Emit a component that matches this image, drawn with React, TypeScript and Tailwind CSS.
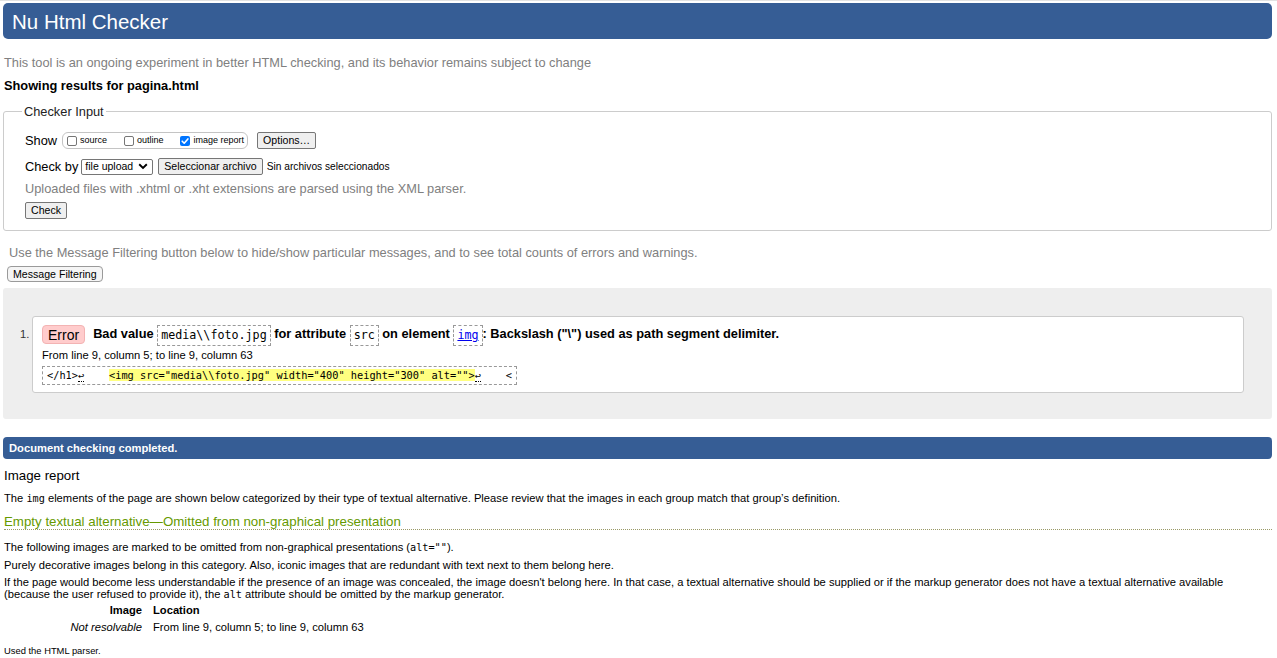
import React from "react";

const Box = ({ checked }: { checked?: boolean }) =>
  checked ? (
    <span className="inline-flex h-[10px] w-[10px] items-center justify-center rounded-[2px] bg-[#0075ff]">
      <svg viewBox="0 0 10 10" className="h-[10px] w-[10px]">
        <path d="M2.2 5.2 L4.2 7.2 L7.9 2.9" stroke="white" strokeWidth="1.6" fill="none" strokeLinecap="round" strokeLinejoin="round" />
      </svg>
    </span>
  ) : (
    <span className="inline-block h-[10px] w-[10px] rounded-[2px] border border-[#767676] bg-white" />
  );

const Btn = ({ children, className = "" }: { children: React.ReactNode; className?: string }) => (
  <span
    className={
      "inline-flex h-[17px] items-center rounded-[2px] border border-[#767676] bg-[#efefef] px-[5px] text-[10.6px] leading-none text-black " +
      className
    }
  >
    {children}
  </span>
);

const Code = ({ children }: { children: React.ReactNode }) => (
  <code className="inline-block h-[21px] border border-dashed border-[#999] px-[3px] align-middle font-['DejaVu_Sans_Mono',monospace] text-[11.7px] font-normal leading-[19px]">
    {children}
  </code>
);

const Ret = () => <span className="border-b border-dotted border-black">↩</span>;

export default function App() {
  return (
    <div className="min-h-[658px] bg-white font-['Liberation_Sans',Arial,Helvetica,sans-serif] text-[12.8px] leading-[15px] text-black">
      <div className="h-px bg-[#e2e2e2]" />
      <h1 className="ml-[3px] mr-[5px] mt-[2px] flex h-[36px] items-center rounded-[5px] bg-[#365d95] pl-[9px] text-[20.5px] font-normal text-white">
        Nu Html Checker
      </h1>
      <p className="mt-[16px] pl-[4px] text-[#808080]">
        This tool is an ongoing experiment in better HTML checking, and its behavior remains subject to change
      </p>
      <p className="mt-[8px] pl-[4px] font-bold">Showing results for pagina.html</p>

      <fieldset className="ml-[3px] mr-[5px] mt-[11px] rounded-[3px] border border-[#cccccc] pb-[11px] pl-[18px] pt-[13px]">
        <legend className="px-[2px] text-[#222]">Checker Input</legend>
        <div className="pl-[3px]">
          <div className="flex h-[17px] items-center">
            <span>Show</span>
            <span className="ml-[5px] flex h-[17px] items-center rounded-[6px] border border-[#c4c4c4] pl-[4px] pr-[3px] text-[9px]">
              <Box />
              <span className="ml-[3px]">source</span>
              <span className="ml-[17px] flex">
                <Box />
              </span>
              <span className="ml-[3px]">outline</span>
              <span className="ml-[16px] flex">
                <Box checked />
              </span>
              <span className="ml-[4px]">image report</span>
            </span>
            <Btn className="ml-[9px] h-[16px]">Options…</Btn>
          </div>

          <div className="mt-[9px] flex h-[17px] items-center">
            <span>Check by</span>
            <span className="ml-[3px] flex h-[16px] items-center rounded-[2px] border border-[#767676] bg-white pl-[3px] pr-[4px] text-[10.5px] leading-none">
              file upload
              <svg viewBox="0 0 10 7" className="ml-[5px] h-[7px] w-[10px]">
                <path d="M1.2 1.3 L5 5 L8.8 1.3" stroke="black" strokeWidth="1.9" fill="none" />
              </svg>
            </span>
            <Btn className="ml-[5px] h-[16px]">Seleccionar archivo</Btn>
            <span className="ml-[4px] text-[10.2px]">Sin archivos seleccionados</span>
          </div>

          <p className="mt-[6px] text-[#808080]">
            Uploaded files with .xhtml or .xht extensions are parsed using the XML parser.
          </p>

          <div className="mt-[6px] flex">
            <Btn>Check</Btn>
          </div>
        </div>
      </fieldset>

      <p className="mt-[14px] pl-[9px] text-[#808080]">
        Use the Message Filtering button below to hide/show particular messages, and to see total counts of errors and warnings.
      </p>
      <div className="ml-[7px] mt-[6px] flex">
        <span className="inline-flex h-[16px] items-center rounded-[4px] border border-[#9a9a9a] bg-[#f5f5f5] px-[5px] text-[10.6px] leading-none">
          Message Filtering
        </span>
      </div>

      <div className="ml-[3px] mr-[5px] mt-[6px] rounded-[3px] bg-[#eeeeee] pb-[26px] pl-[17px] pr-[28px] pt-[28px]">
        <div className="flex">
          <span className="w-[12px] pt-[12px] text-[11.2px] leading-[13px] text-[#333]">1.</span>
          <div className="flex-1 rounded-[3px] border border-[#cccccc] bg-white pb-[7px] pl-[9px] pt-[7px]">
            <div className="flex h-[21px] items-center">
              <span className="inline-flex h-[19px] items-center rounded-[4px] border border-[#f3b3b3] bg-[#ffcccc] px-[5px] text-[14px] leading-none">
                Error
              </span>
              <p className="ml-[8px] whitespace-nowrap font-bold leading-[21px]">
                Bad value <Code>{"media\\\\foto.jpg"}</Code> for attribute <Code>src</Code> on element{" "}
                <Code>
                  <a className="text-[#0000ee] underline">img</a>
                </Code>
                {': Backslash ("\\") used as path segment delimiter.'}
              </p>
            </div>
            <p className="mt-[4px] text-[11.2px] leading-[13px]">From line 9, column 5; to line 9, column 63</p>
            <div className="mt-[4px] h-[19px]">
              <code className="inline-block h-[19px] whitespace-pre border border-dashed border-[#999] pl-[4px] pr-[4px] font-['DejaVu_Sans_Mono',monospace] text-[10.3px] leading-[17px]">
                {"</h1>"}
                <Ret />
                {"    "}
                <mark className="bg-[#ffff80] text-black">{'<img src="media\\\\foto.jpg" width="400" height="300" alt="">'}</mark>
                <Ret />
                {"    <"}
              </code>
            </div>
          </div>
        </div>
      </div>

      <div className="ml-[3px] mr-[5px] mt-[18px] flex h-[22px] items-center rounded-[4px] bg-[#365d95] pl-[6px] text-[11.2px] font-bold text-white">
        Document checking completed.
      </div>

      <h2 className="mt-[9px] pl-[4px] text-[13.3px] font-normal leading-[16px]">Image report</h2>
      <p className="mt-[8px] pl-[4px] text-[11.2px] leading-[13px]">
        The <code className="font-['DejaVu_Sans_Mono',monospace] text-[10.2px]">img</code> elements of the page are shown below
        categorized by their type of textual alternative. Please review that the images in each group match that group’s
        definition.
      </p>
      <h3 className="ml-[4px] mr-[5px] mt-[10px] border-b border-dotted border-[#999966] text-[13.3px] font-normal leading-[14px] text-[#669900]">
        Empty textual alternative—Omitted from non-graphical presentation
      </h3>
      <div className="pl-[4px] text-[11.2px] leading-[12px]">
        <p className="mt-[11px]">
          The following images are marked to be omitted from non-graphical presentations (
          <code className="font-['DejaVu_Sans_Mono',monospace] text-[10.2px]">alt=""</code>).
        </p>
        <p className="mt-[5px]">
          Purely decorative images belong in this category. Also, iconic images that are redundant with text next to them belong
          here.
        </p>
        <p className="mt-[5px]">
          If the page would become less understandable if the presence of an image was concealed, the image doesn't belong here.
          In that case, a textual alternative should be supplied or if the markup generator does not have a textual alternative
          available
          <br />
          (because the user refused to provide it), the{" "}
          <code className="font-['DejaVu_Sans_Mono',monospace] text-[10.2px]">alt</code> attribute should be omitted by the markup
          generator.
        </p>
      </div>
      <div className="mt-[1px] text-[11.2px]">
        <div className="flex h-[17px] items-center font-bold">
          <span className="w-[142px] text-right">Image</span>
          <span className="ml-[11px]">Location</span>
        </div>
        <div className="flex h-[17px] items-center">
          <span className="w-[142px] text-right italic">Not resolvable</span>
          <span className="ml-[11px]">From line 9, column 5; to line 9, column 63</span>
        </div>
      </div>
      <p className="mt-[9px] pl-[4px] text-[9.4px] leading-[11px]">Used the HTML parser.</p>
    </div>
  );
}
